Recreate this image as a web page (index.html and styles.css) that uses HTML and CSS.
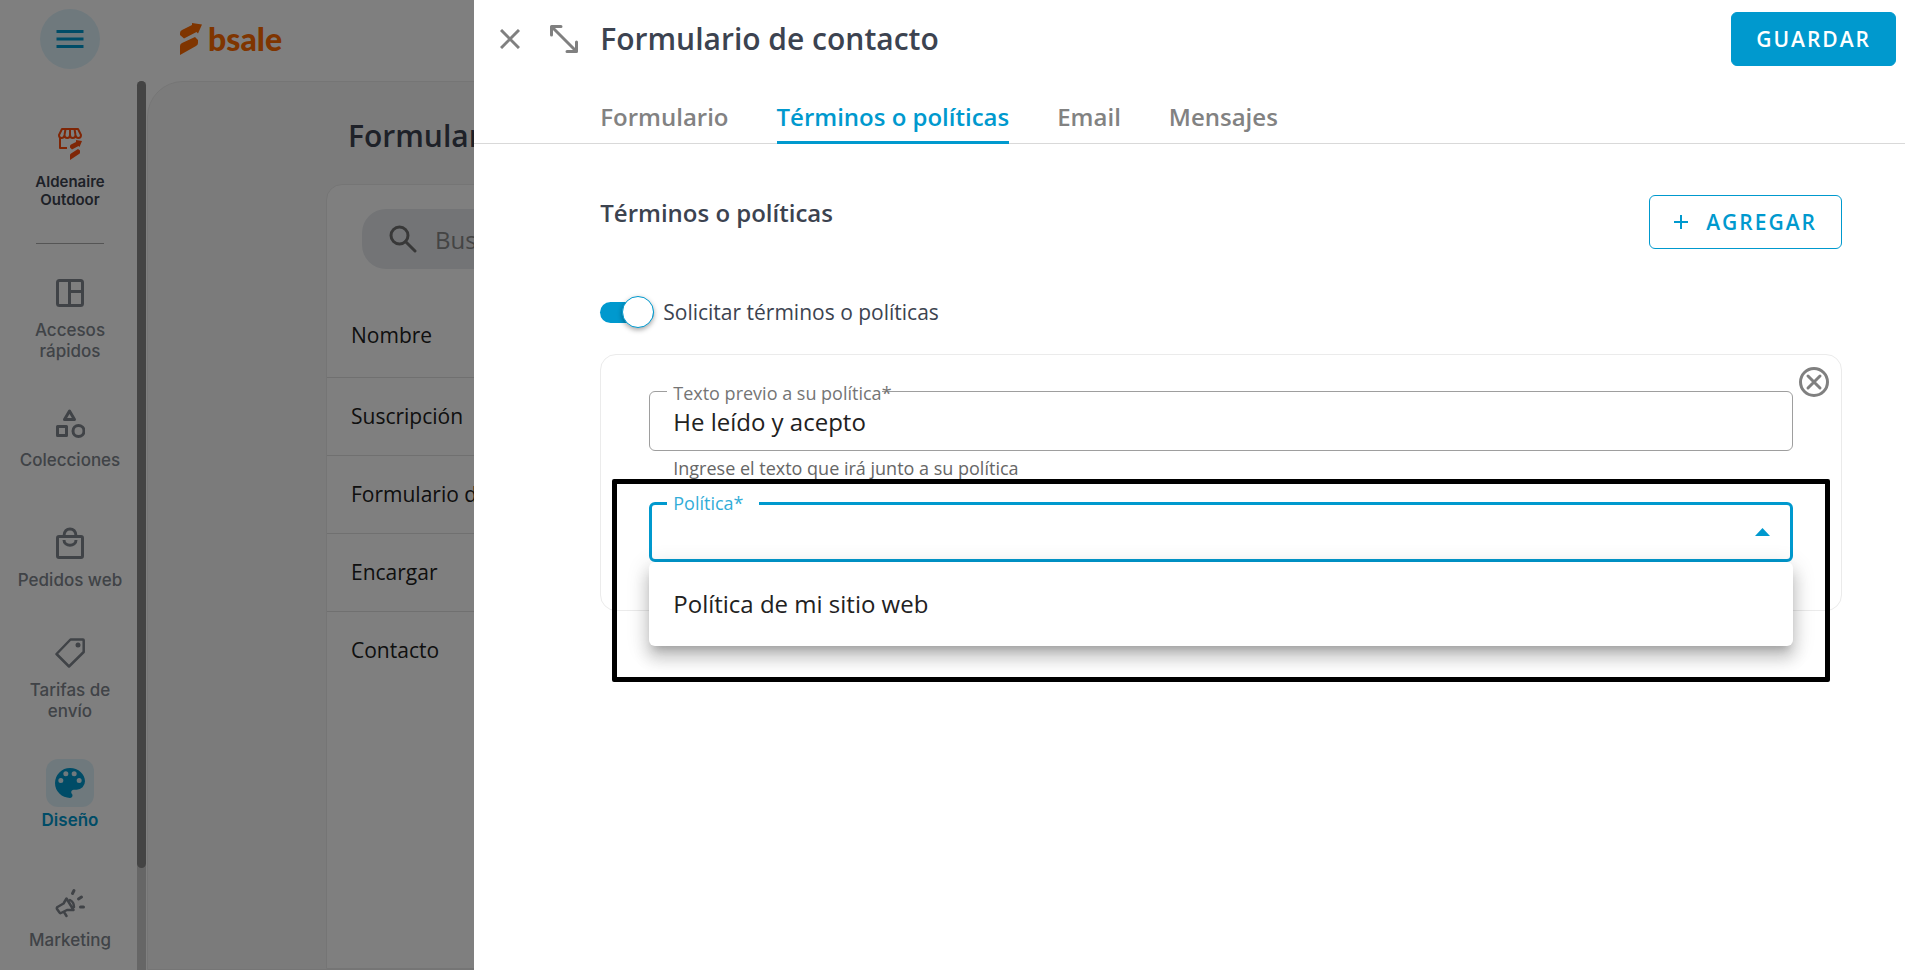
FILE: index.html
```html
<!DOCTYPE html>
<html lang="es">
<head>
<meta charset="utf-8">
<title>Formulario de contacto</title>
<link rel="stylesheet" href="styles.css">
</head>
<body>
<div class="app">
  <header class="topbar">
    <div class="menu-slot">
      <button class="menu-button" type="button" aria-label="Menú">
        <svg width="28" height="18" viewBox="0 0 28 18" fill="none" stroke="currentColor" stroke-width="3"><path d="M.5 1.5h27M.5 9h27M.5 16.500h27"/></svg>
      </button>
    </div>
    <a class="brand" href="#">
      <svg width="22" height="32" viewBox="0 0 22 32" fill="currentColor"><path d="M0 10Q0 8 2 7L12 2V0L22 1.500 18 10.500 16.500 9 4 15.500 0 12Z"/><path d="M15 14 18 17V20Q18 22 16 23L0 32V23Q0 21 2 20Z"/></svg>
      <span>bsale</span>
    </a>
  </header>
  <div class="shell">
    <aside class="sidebar">
      <div class="side-content">
        <div class="store">
          <svg width="24" height="32" viewBox="0 0 24 32" fill="none" stroke="currentColor" stroke-width="2" stroke-linejoin="round"><path d="M4 1h16l3 6c0 4-5 4-5.500 0 0 4-5.500 4-5.500 0 0 4-5.500 4-5.500 0C6 11 1 11 1 7L4 1ZM7.500 1l-1 6M12 1v6M16.500 1l1 6M2 10v10h7"/><g fill="currentColor" stroke="none"><path d="M12 18q0-1 1-1.500l5-2.500v-2l6 1-2.500 6-1-1-6.500 3.500-2-2Z"/><path d="m20 21 2 1.500v2q0 1-1 1.500l-9 6v-5q0-1 1-1.500Z"/></g></svg>
          <span>Aldenaire Outdoor</span>
        </div>
        <nav class="side-nav" aria-label="Principal">
          <a class="side-item" href="#"><span class="tile"><svg width="28" height="28" viewBox="0 0 28 28" fill="none" stroke="currentColor" stroke-width="3"><rect x="1.500" y="1.500" width="25" height="25" rx="2"/><path d="M13.500 1.500v25M13.500 12.500h13"/></svg></span>Accesos rápidos</a>
          <a class="side-item" href="#"><span class="tile"><svg width="30" height="30" viewBox="0 0 30 30" fill="none" stroke="currentColor" stroke-width="3" stroke-linejoin="round"><path d="m14.500 3 5 8.500h-10Z"/><path d="M2.500 18.500h9v9h-9Z"/><circle cx="23.500" cy="23" r="5.500"/></svg></span>Colecciones</a>
          <a class="side-item" href="#"><span class="tile"><svg width="28" height="32" viewBox="0 0 28 32" fill="none" stroke="currentColor" stroke-width="3"><rect x="1.500" y="9.500" width="25" height="21" rx="1.500"/><path d="M8 9C8-.5 20-.5 20 9M8 13c0 7 12 7 12 0"/></svg></span>Pedidos web</a>
          <a class="side-item" href="#"><span class="tile"><svg width="30" height="30" viewBox="0 0 30 30" fill="none" stroke="currentColor" stroke-width="2.500" stroke-linejoin="round"><path d="M15.500 1.500H28q.7 0 .7.700V14L14 28.500 1.500 16Z"/><circle cx="23" cy="7" r="2.500" fill="currentColor" stroke="none"/></svg></span>Tarifas de envío</a>
          <a class="side-item active" href="#" aria-current="page"><span class="tile"><svg width="30" height="30" viewBox="3 3 18 18" fill="currentColor"><path fill-rule="evenodd" d="M12 3a9 9 0 0 0 0 18c.83 0 1.500-.67 1.500-1.500 0-.39-.15-.74-.39-1.010-.23-.26-.38-.61-.38-.99 0-.83.67-1.500 1.500-1.500H16a5 5 0 0 0 5-5c0-4.420-4.030-8-9-8Zm-5.500 9a1.500 1.500 0 1 1 0-3 1.500 1.500 0 0 1 0 3Zm3-4a1.500 1.500 0 1 1 0-3 1.500 1.500 0 0 1 0 3Zm5 0a1.500 1.500 0 1 1 0-3 1.500 1.500 0 0 1 0 3Zm3 4a1.500 1.500 0 1 1 0-3 1.500 1.500 0 0 1 0 3Z"/></svg></span>Diseño</a>
          <a class="side-item" href="#"><span class="tile"><svg width="30" height="30" viewBox="0 0 30 30" fill="none" stroke="currentColor" stroke-width="2.500" stroke-linecap="round" stroke-linejoin="round"><path d="M11.500 10.500 18.500 22H12l-6 3q-1 .5-1.500-.5L2 21q-.5-1 .5-2l6-3.500ZM9 24l2.500 4M15 12q4 2 4 7"/><path stroke-width="3" d="m17.500 5.500 1.500-3M23.500 11l3-2M25.500 19h3"/></svg></span>Marketing</a>
        </nav>
      </div>
      <div class="scroll-track"><div class="scroll-thumb"></div></div>
    </aside>
    <main class="page">
      <h1>Formularios</h1>
      <section class="list-card">
        <label class="search">
          <svg width="28" height="28" viewBox="0 0 28 28" fill="none" stroke="currentColor" stroke-width="3"><circle cx="10.500" cy="10.500" r="8.500"/><path d="m16.500 16.500 9.500 9.500" stroke-linecap="round"/></svg>
          <input type="search" placeholder="Buscar" aria-label="Buscar">
        </label>
        <table class="forms">
          <thead><tr><th scope="col">Nombre</th></tr></thead>
          <tbody>
            <tr><td>Suscripción</td></tr>
            <tr><td>Formulario de contacto</td></tr>
            <tr><td>Encargar</td></tr>
            <tr><td>Contacto</td></tr>
          </tbody>
        </table>
      </section>
    </main>
  </div>
</div>
<div class="backdrop"></div>

<section class="drawer" role="dialog" aria-labelledby="drawer-title">
  <header class="drawer-head">
    <button class="icon-button" type="button" aria-label="Cerrar"><svg width="20" height="20" viewBox="0 0 20 20" fill="none" stroke="currentColor" stroke-width="3"><path d="m1 1 18 18M19 1 1 19"/></svg></button>
    <button class="icon-button" type="button" aria-label="Expandir"><svg width="28" height="28" viewBox="0 0 28 28" fill="none" stroke="currentColor" stroke-width="3" stroke-linecap="round" stroke-linejoin="round"><path d="m2 2 24 24M1.500 10V1.500H11M26.500 17v9.500H17"/></svg></button>
    <h2 id="drawer-title">Formulario de contacto</h2>
    <button class="button solid" type="button">GUARDAR</button>
  </header>
  <nav class="tabs" aria-label="Secciones del formulario">
    <a class="tab" href="#">Formulario</a>
    <a class="tab current" href="#" aria-current="page">Términos o políticas</a>
    <a class="tab" href="#">Email</a>
    <a class="tab" href="#">Mensajes</a>
  </nav>
  <div class="drawer-body">
    <div class="section-head">
      <h3>Términos o políticas</h3>
      <button class="button outline" type="button"><svg width="14" height="14" viewBox="0 0 14 14" fill="none" stroke="currentColor" stroke-width="2"><path d="M7 0v14M0 7h14"/></svg>AGREGAR</button>
    </div>
    <label class="switch">
      <input type="checkbox" role="switch" checked>
      <span>Solicitar términos o políticas</span>
    </label>
    <div class="policy-card">
      <button class="remove" type="button" aria-label="Eliminar"><svg width="30" height="30" viewBox="0 0 30 30" fill="none" stroke="currentColor" stroke-width="3"><circle cx="15" cy="15" r="13.500"/><path d="m9 9 12 12M21 9 9 21" stroke-linecap="round"/></svg></button>
      <div class="field">
        <input id="prev-text" type="text" value="He leído y acepto" aria-describedby="prev-help">
        <label class="required" for="prev-text">Texto previo a su política</label>
      </div>
      <p class="help" id="prev-help">Ingrese el texto que irá junto a su política</p>
      <div class="field focused">
        <select id="policy"><option value="" selected></option><option>Política de mi sitio web</option></select>
        <label for="policy">Política*</label>
        <svg class="arrow" width="15" height="8" viewBox="0 0 15 8" fill="currentColor"><path d="M7.500 0 15 8H0Z"/></svg>
        <ul class="options" role="listbox" aria-label="Política">
          <li role="option" aria-selected="false">Política de mi sitio web</li>
        </ul>
        <div class="highlight"></div>
      </div>
    </div>
  </div>
</section>
</body>
</html>
```
FILE: styles.css
```css
* { box-sizing: border-box; }

:root {
  --blue: #0099ce;
  --ink: #3c4350;
  --gray: #80868e;
}

body {
  margin: 0;
  font-family: "Open Sans", sans-serif;
  color: #212121;
  background: #fff;
  overflow: hidden;
}

button, input, select { font: inherit; color: inherit; }
button { cursor: pointer; }
a { text-decoration: none; color: inherit; }
svg { display: block; flex: none; }

/* Page behind the drawer */
.app { display: flex; flex-direction: column; height: 100vh; overflow: hidden; }
.topbar { display: flex; align-items: center; flex: none; height: 81px; padding-bottom: 3px; }
.menu-slot { display: flex; justify-content: center; width: 140px; }
.menu-button {
  display: grid;
  place-items: center;
  width: 60px;
  height: 60px;
  padding: 0;
  border: 0;
  border-radius: 50%;
  background: #dff3fb;
  color: var(--blue);
}
.brand {
  display: flex;
  align-items: center;
  gap: 6px;
  margin-left: 40px;
  font-family: Lato, sans-serif;
  font-size: 32px;
  line-height: 32px;
  font-weight: 900;
  color: #ff6a00;
}
.shell { display: flex; flex: 1; min-height: 0; }
.sidebar { display: flex; flex: none; width: 146px; }
.side-content { flex: 1; min-width: 0; overflow: hidden; padding-left: 3px; }
.store {
  display: flex;
  flex-direction: column;
  align-items: center;
  gap: 13px;
  margin: 47px 33px 11px;
  padding-bottom: 34px;
  border-bottom: 1px solid #aaa;
  color: #ff4d0d;
}
.store span {
  width: 96px;
  font: 600 15px/18px Inter, sans-serif;
  text-align: center;
  color: var(--ink);
}
.side-nav { display: flex; flex-direction: column; }
.side-item {
  display: flex;
  flex: none;
  flex-direction: column;
  align-items: center;
  justify-content: center;
  gap: 3px;
  height: 120px;
  padding: 0 6px;
  font: 500 17px/21px Inter, sans-serif;
  text-align: center;
  color: var(--gray);
}
.tile { display: grid; place-items: center; width: 48px; height: 48px; border-radius: 12px; }
.side-item.active { font-weight: 600; color: var(--blue); }
.side-item.active .tile { background: #dff3fb; }
.scroll-track { width: 9px; background: #cdcdcd; border-radius: 5px 5px 0 0; }
.scroll-thumb { height: 88.5%; border-radius: 5px; background: #888; }

.page {
  flex: 1;
  margin-left: 1px;
  padding: 36px 48px 0 178px;
  border: 1px solid #ebebeb;
  border-radius: 36px 0 0 0;
  background: #f7f7f7;
  display: flex;
  flex-direction: column;
}
.page h1 { margin: 0 0 30px 22px; font-size: 30px; line-height: 36px; font-weight: 600; color: var(--ink); }
.list-card {
  flex: 1;
  padding-top: 24px;
  border: 1px solid #ebebeb;
  border-radius: 16px 16px 0 0;
  background: #fff;
}
.search {
  display: flex;
  align-items: center;
  gap: 18px;
  height: 60px;
  margin: 0 36px 24px 35px;
  padding: 0 27px;
  border-radius: 24px;
  background: #e6e9ed;
  color: #717171;
}
.search input { flex: 1; min-width: 0; padding: 0; border: 0; background: none; font-size: 24px; }
.search input::placeholder { color: #888; opacity: 1; }
.forms { width: 100%; border-collapse: collapse; font-size: 21px; line-height: 30px; }
.forms th, .forms td { height: 78px; padding: 0 24px; text-align: left; border-top: 1px solid #e0e0e0; }
.forms th { height: 84px; border-top: 0; font-weight: 500; }

.backdrop { position: fixed; inset: 0; background: rgba(0, 0, 0, 0.5); }

/* Drawer */
.drawer {
  position: fixed;
  top: 0;
  right: 0;
  bottom: 0;
  width: calc(75% + 2px);
  background: #fff;
}
.drawer-head { display: flex; align-items: center; gap: 18px; height: 78px; padding: 0 9px 0 18px; }
.drawer-head h2 { flex: 1; margin: 0; font-size: 30px; line-height: 48px; font-weight: 600; color: var(--ink); }
.icon-button {
  display: grid;
  place-items: center;
  width: 36px;
  height: 36px;
  padding: 0;
  border: 0;
  background: none;
  color: #808080;
}
.button {
  display: flex;
  align-items: center;
  gap: 18px;
  height: 54px;
  padding: 0 24px;
  border: 1px solid var(--blue);
  border-radius: 6px;
  font-size: 21px;
  font-weight: 600;
  letter-spacing: 2px;
}
.solid { background: var(--blue); color: #fff; }
.outline { background: #fff; color: var(--blue); }
.tabs { display: flex; gap: 48px; height: 66px; padding: 21px 63px 0 126px; border-bottom: 1px solid #d9d9d9; }
.tab { height: 45px; font-size: 24px; line-height: 36px; font-weight: 600; color: #828282; }
.tab.current { color: var(--blue); border-bottom: 3px solid var(--blue); }

.drawer-body { padding: 51px 63px 0 126px; }
.section-head { display: flex; justify-content: space-between; align-items: flex-start; }
.section-head h3 { margin: 0; font-size: 24px; line-height: 36px; font-weight: 600; color: var(--ink); }
.switch {
  display: inline-flex;
  align-items: center;
  gap: 9px;
  height: 30px;
  margin: 48px 0 27px;
  font-size: 21px;
  line-height: 30px;
  color: var(--ink);
}
.switch input {
  appearance: none;
  display: flex;
  align-items: center;
  justify-content: flex-end;
  width: 54px;
  height: 21px;
  margin: 0;
  border-radius: 11px;
  background: var(--blue);
}
.switch input::before {
  content: "";
  flex: none;
  width: 30px;
  height: 30px;
  border: 1px solid var(--blue);
  border-radius: 50%;
  background: #fff;
  box-shadow: 0 2px 5px rgba(0, 0, 0, 0.35);
}
.policy-card { position: relative; padding: 36px 48px 48px; border: 1px solid #ebebeb; border-radius: 16px; }
.remove {
  position: absolute;
  top: 12px;
  right: 12px;
  padding: 0;
  border: 0;
  background: none;
  color: #808080;
}
.field { position: relative; }
.field input, .field select {
  display: block;
  appearance: none;
  width: 100%;
  height: 60px;
  padding: 0 23px;
  border: 1px solid #9e9e9e;
  border-radius: 6px;
  background: #fff;
  outline: 0;
  font-size: 24px;
}
.field label {
  position: absolute;
  top: -8px;
  left: 18px;
  padding-left: 6px;
  background: #fff;
  font-size: 18px;
  line-height: 21px;
  color: #757575;
}
.field .required::after { content: "*"; position: absolute; left: 100%; }
.help { margin: 0; height: 51px; padding: 5px 24px 0; font-size: 18px; line-height: 24px; color: #666; }
.focused select { border: 3px solid var(--blue); }
.focused label { top: -9px; padding-right: 15px; color: #33add8; }
.arrow { position: absolute; top: 26px; right: 23px; color: var(--blue); }
.options {
  position: absolute;
  top: 60px;
  left: 0;
  right: 0;
  margin: 0;
  padding: 12px 0;
  border-radius: 6px;
  background: #fff;
  list-style: none;
  box-shadow: 0 8px 8px -5px rgba(0, 0, 0, 0.2), 0 12px 15px 2px rgba(0, 0, 0, 0.14), 0 5px 21px 3px rgba(0, 0, 0, 0.12);
}
.options li { padding: 0 24px; font-size: 24px; line-height: 60px; }
.highlight {
  position: absolute;
  top: -23px;
  bottom: -120px;
  left: -37px;
  right: -37px;
  border: 5px solid #000;
  border-radius: 2px;
  pointer-events: none;
}
```
